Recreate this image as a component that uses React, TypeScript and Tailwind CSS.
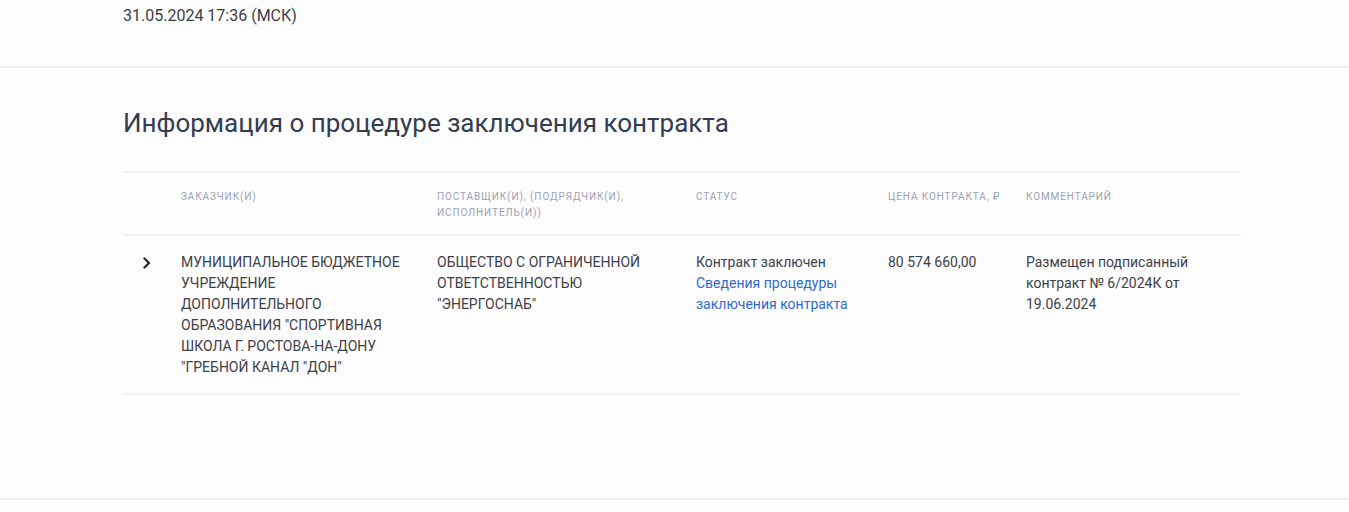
import React from "react";

const Chevron = () => (
  <svg width="10" height="12" viewBox="0 0 10 12" className="mt-[5px] ml-[19px]">
    <path d="M2.5 1.5 L7 6 L2.5 10.5" fill="none" stroke="#2b2f38" strokeWidth="2.4" strokeLinecap="round" strokeLinejoin="round" />
  </svg>
);

export default function App() {
  return (
    <div className="w-full min-h-[512px] bg-[#fdfdfd] font-['Roboto','Liberation_Sans',sans-serif]">
      <div className="pl-[123px] pt-[4px] h-[66px]">
        <div className="text-[16px] leading-[24px] text-[#3a3d45]">31.05.2024 17:36 (МСК)</div>
      </div>
      <div className="h-[2px] bg-[#eff0f5]" />
      <div className="pl-[123px] pr-[108px] pt-[39px] h-[430px]">
        <h2 className="text-[26px] leading-[32px] text-[#323c52] font-normal">
          Информация о процедуре заключения контракта
        </h2>
        <div className="mt-[32px] border-t-2 border-[#eff1f4]">
          <div className="grid grid-cols-[58px_256px_259px_192px_138px_1fr] border-b-2 border-[#eff1f4] h-[63px] pt-[16px] text-[10px] leading-[16px] tracking-[0.9px] uppercase text-[#9ba2b2]">
            <div />
            <div className="pr-4">Заказчик(и)</div>
            <div className="pr-4">Поставщик(и), (подрядчик(и), исполнитель(и))</div>
            <div className="pr-4">Статус</div>
            <div className="pr-2 whitespace-nowrap">Цена контракта, ₽</div>
            <div className="pr-4">Комментарий</div>
          </div>
          <div className="grid grid-cols-[58px_256px_259px_192px_138px_1fr] border-b-2 border-[#eff1f4] pt-[16px] pb-[15px] text-[14px] leading-[21px] text-[#3d4048]">
            <div>
              <Chevron />
            </div>
            <div className="pr-[30px] uppercase">
              Муниципальное бюджетное учреждение дополнительного образования "Спортивная школа г. Ростова-на-Дону "Гребной канал "Дон"
            </div>
            <div className="pr-[30px] uppercase">
              Общество с ограниченной ответственностью "ЭНЕРГОСНАБ"
            </div>
            <div className="pr-[30px]">
              <div>Контракт заключен</div>
              <div className="text-[#2d6bd0]">Сведения процедуры заключения контракта</div>
            </div>
            <div className="pr-2">80 574 660,00</div>
            <div className="pr-[40px]">Размещен подписанный контракт № 6/2024К от 19.06.2024</div>
          </div>
        </div>
      </div>
      <div className="h-[2px] bg-[#eff0f5]" />
    </div>
  );
}
